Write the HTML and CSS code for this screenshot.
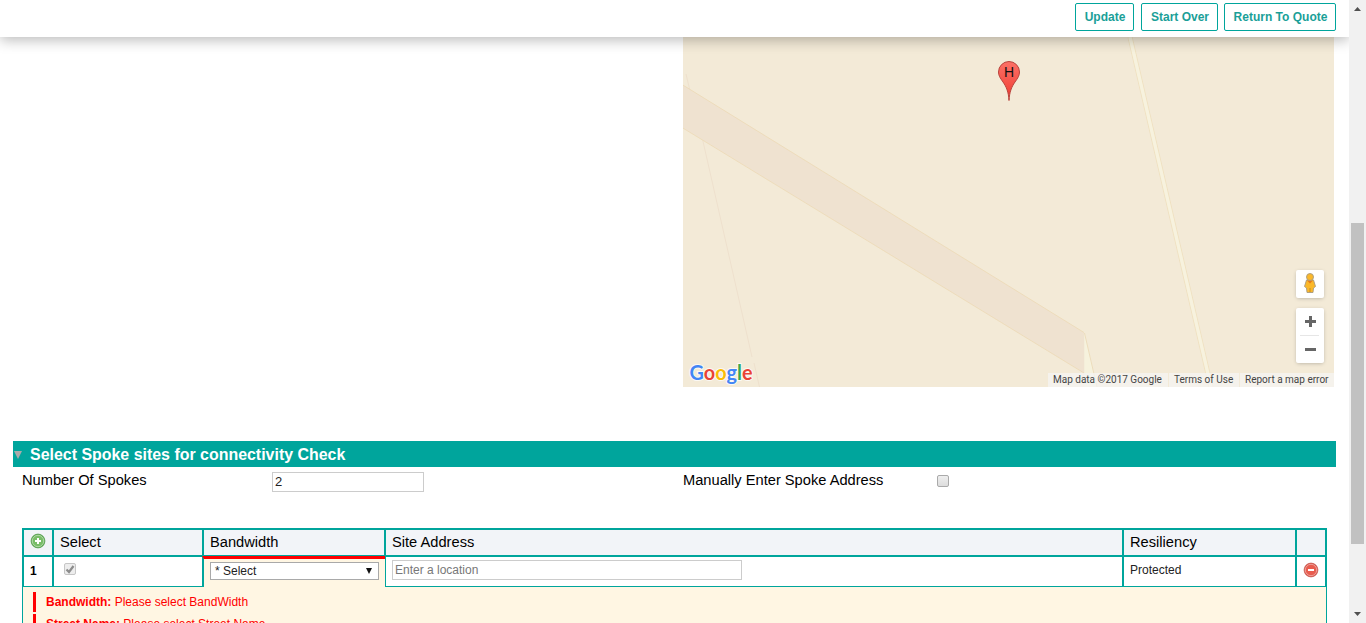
FILE: index.html
```html
<!DOCTYPE html>
<html lang="en">
<head>
<meta charset="utf-8">
<title>Connectivity Check</title>
<link rel="stylesheet" href="styles.css">
</head>
<body>
<div class="page">
  <header class="toolbar">
    <button class="btn">Update</button>
    <button class="btn">Start Over</button>
    <button class="btn">Return To Quote</button>
  </header>

  <div class="map">
    <svg class="map-tiles" width="651" height="350" viewBox="0 0 651 350">
      <rect width="651" height="350" fill="#f3ead7"/>
      <path d="M3 37 7 54M19 100 69 320M71 326 76.500 350" fill="none" stroke="#eee0cd"/>
      <path d="M-1 47.500 401 295.500V336L-1 90.500Z" fill="#efe2d0"/>
      <path d="M-1 47.500 401 295.500M401 336-1 90.500" fill="none" stroke="#ecd9b5" stroke-width=".8"/>
      <path d="M401.500 296V350H414.500Z" fill="#f6f2dd"/>
      <path d="M401.500 296 414 350" fill="none" stroke="#ecdcbc"/>
      <path d="M447 0 528 350" fill="none" stroke="#efe0bf" stroke-width="5"/>
      <path d="M447 0 528 350" fill="none" stroke="#f7f2de" stroke-width="3.400"/>
    </svg>
    <svg class="marker" width="24" height="42" viewBox="0 0 24 42">
      <defs><linearGradient id="pin" x1="0" y1="0" x2="0" y2="1"><stop offset="0" stop-color="#fc7167"/><stop offset="1" stop-color="#ef3a30"/></linearGradient></defs>
      <path d="M12 40.500C11.500 32 9.500 27 6 22 3 17.800 1.500 15.500 1.500 12A10.500 10.500 0 0 1 22.500 12C22.500 15.500 21 17.800 18 22 14.500 27 12.500 32 12 40.500Z" fill="url(#pin)" stroke="#b9433c"/>
      <text x="12" y="17" text-anchor="middle" class="marker-label">H</text>
    </svg>
    <svg class="logo" width="68" height="28" viewBox="0 0 68 28">
      <text x="2.500" y="20" textLength="63" lengthAdjust="spacingAndGlyphs"><tspan fill="#4285f4">G</tspan><tspan fill="#ea4335">o</tspan><tspan fill="#fbbc05">o</tspan><tspan fill="#4285f4">g</tspan><tspan fill="#34a853">l</tspan><tspan fill="#ea4335">e</tspan></text>
    </svg>
    <div class="map-controls">
      <div class="control pegman">
        <svg width="14" height="22" viewBox="0 0 14 22">
          <path d="M3.500 8H10.500L12.500 14.500 10.500 16 10 20.500H4L3.500 16 1.500 14.500Z" fill="#fbb829" stroke="#a79a80" stroke-width=".9"/>
          <path d="M4 8.500H10L7 11.500Z" fill="#e87a19"/>
          <path d="M7 16V20" stroke="#c58c20"/>
          <circle cx="7" cy="5" r="3.500" fill="#fbb829" stroke="#a79a80" stroke-width=".9"/>
        </svg>
      </div>
      <div class="control zoom">
        <svg width="28" height="55" viewBox="0 0 28 55">
          <path d="M9 13.500H20M14.500 8V19M9 41.500H20" stroke="#666" stroke-width="3" fill="none"/>
          <path d="M4 27.500H23" stroke="#e6e6e6"/>
        </svg>
      </div>
    </div>
    <div class="map-credits">
      <span class="credit-data">Map data ©2017 Google</span><span class="credit-terms">Terms of Use</span><span class="credit-report">Report a map error</span>
    </div>
  </div>

  <section class="spokes">
    <h2 class="section-title"><svg width="8" height="8" viewBox="0 0 8 8"><path d="M0 0H8L4 8Z" fill="#aaa"/></svg>Select Spoke sites for connectivity Check</h2>
    <div class="fields">
      <label class="label-count">Number Of Spokes</label>
      <div class="text-box count">2</div>
      <label class="label-manual">Manually Enter Spoke Address</label>
      <div class="checkbox"></div>
    </div>

    <div class="grid">
      <div class="row head">
        <div class="cell center">
          <svg width="16" height="16" viewBox="0 0 16 16"><circle cx="8" cy="8" r="6.900" fill="#67b15c" stroke="#529b4a" stroke-width=".8"/><circle cx="8" cy="8" r="5.700" fill="#78bd68" stroke="#b5dbac" stroke-width=".9"/><path d="M8 5V11M5 8H11" stroke="#fff" stroke-width="2"/></svg>
        </div>
        <div class="cell">Select</div>
        <div class="cell">Bandwidth</div>
        <div class="cell">Site Address</div>
        <div class="cell">Resiliency</div>
        <div class="cell"></div>
      </div>
      <div class="row body">
        <div class="cell number">1</div>
        <div class="cell pick">
          <div class="checkbox disabled"><svg width="10" height="10" viewBox="0 0 10 10"><path d="M1.500 5.500 4 8 8.500 2" fill="none" stroke="#8c8c8c" stroke-width="2.200"/></svg></div>
        </div>
        <div class="cell invalid">
          <div class="select">* Select<svg width="6" height="6" viewBox="0 0 6 6"><path d="M0 0H6L3 6Z" fill="#111"/></svg></div>
        </div>
        <div class="cell address"><div class="text-box location">Enter a location</div></div>
        <div class="cell resiliency">Protected</div>
        <div class="cell center">
          <svg width="16" height="16" viewBox="0 0 16 16"><circle cx="8" cy="8" r="6.900" fill="#d9534a" stroke="#c65a50" stroke-width=".8"/><circle cx="8" cy="8" r="5.700" fill="#e85c4e" stroke="#f0a79f" stroke-width=".9"/><path d="M5 8H11" stroke="#fff" stroke-width="2"/></svg>
        </div>
      </div>
      <div class="errors">
        <p class="error"><b>Bandwidth:</b> Please select BandWidth</p>
        <p class="error"><b>Street Name:</b> Please select Street Name</p>
      </div>
    </div>
  </section>
</div>

<div class="scrollbar">
  <svg width="7" height="4" viewBox="0 0 7 4"><path d="M0 4H7L3.500 0Z" fill="#505050"/></svg>
  <div class="track"><div class="thumb"></div></div>
  <svg width="7" height="4" viewBox="0 0 7 4"><path d="M0 0H7L3.500 4Z" fill="#505050"/></svg>
</div>
</body>
</html>
```
FILE: styles.css
```css
* { box-sizing: border-box; }

body {
  margin: 0;
  display: flex;
  width: 1366px;
  height: 623px;
  overflow: hidden;
  background: #fff;
  color: #000;
  font-family: "Liberation Sans", Arial, sans-serif;
}

svg { display: block; flex: none; }

.page {
  width: 1349px;
  height: 623px;
  overflow: hidden;
}

.toolbar {
  position: relative;
  z-index: 2;
  display: flex;
  justify-content: flex-end;
  height: 37px;
  padding: 3px 13px 0 0;
  background: #fff;
  box-shadow: 0 3px 14px rgba(0, 0, 0, .28);
}

.btn {
  height: 28px;
  margin: 0 0 0 6px;
  padding: 0 7px 0 8px;
  border: 1px solid #00a59c;
  border-radius: 2px;
  background: #fff;
  color: #1a9f98;
  font: bold 12px "Liberation Sans", Arial, sans-serif;
  white-space: nowrap;
}

.btn:nth-child(1) { width: 59px; }
.btn:nth-child(2) { width: 77px; margin-left: 7px; }
.btn:nth-child(3) { width: 112px; }

.map {
  position: relative;
  width: 651px;
  height: 350px;
  margin-left: 683px;
  overflow: hidden;
}

.marker { position: absolute; left: 314px; top: 23px; }
.marker-label { font-size: 14px; fill: #111; }

.logo { position: absolute; left: 4px; top: 323px; }
.logo text {
  font: 700 20px Lato, sans-serif;
  stroke: rgba(255, 255, 255, .75);
  stroke-width: 2px;
  paint-order: stroke;
}

.map-controls {
  position: absolute;
  left: 613px;
  top: 233px;
  display: flex;
  flex-direction: column;
  gap: 10px;
}

.control {
  width: 28px;
  border-radius: 2px;
  background: #fff;
  box-shadow: 0 1px 4px -1px rgba(0, 0, 0, .3);
}

.pegman { display: flex; justify-content: center; height: 28px; padding-top: 2px; }
.zoom { height: 55px; }

.map-credits {
  position: absolute;
  right: 0;
  bottom: 0;
  display: flex;
  gap: 1px;
  height: 14px;
  color: #444;
  font: 10px/14px Roboto, sans-serif;
  white-space: nowrap;
}

.map-credits span { padding-left: 5px; background: rgba(245, 245, 245, .7); }
.credit-data { width: 120px; }
.credit-terms { width: 70px; }
.credit-report { width: 94px; }

.spokes { padding: 54px 13px 0; }

.section-title {
  display: flex;
  align-items: center;
  gap: 8px;
  height: 26px;
  margin: 0;
  padding: 1px 0 0 1px;
  background: #00a59c;
  color: #fff;
  font-size: 15.95px;
  line-height: 26px;
}

.fields {
  display: flex;
  align-items: flex-start;
  height: 61px;
  padding: 5px 0 0 9px;
  font-size: 14.67px;
  line-height: 16px;
}

.label-count { width: 250px; }
.label-manual { width: 254px; margin-left: 259px; }

.text-box {
  height: 20px;
  padding-left: 2px;
  border: 1px solid #ccc;
  background: #fff;
  color: #222;
  font-size: 13px;
  line-height: 18px;
}

.count { width: 152px; }

.checkbox {
  width: 12px;
  height: 12px;
  margin-top: 3px;
  border: 1px solid #aaa;
  border-radius: 2px;
  background: linear-gradient(#eee, #ddd);
}

.checkbox.disabled { border-color: #c6c6c6; background: #ededed; }

.grid { width: 1305px; margin-left: 9px; border-top: 2px solid #00a59c; }

.row { display: grid; grid-template-columns: 30px 150px 182px 738px 173px 32px; }
.cell { border-left: 2px solid #00a59c; padding-left: 6px; }
.cell:last-child { border-right: 2px solid #00a59c; }

.head .cell {
  height: 27px;
  border-bottom: 2px solid #00a59c;
  background: #f2f4f8;
  font-size: 14.67px;
  line-height: 24px;
}

.body .cell { height: 30px; border-bottom: 1px solid #00a59c; font-size: 12px; }

.row .cell.center { display: flex; align-items: flex-start; justify-content: center; padding: 3px 0 0; }
.body .cell.center { padding-top: 5px; }
.body .number { font-weight: bold; line-height: 28px; }
.pick { padding: 6px 0 0 10px; }
.pick .checkbox { margin: 0; }
.row .invalid {
  position: relative;
  height: 31px;
  margin: -1px 0 0 0;
  padding-top: 3px;
  border-top: 3px solid #f00;
  border-left-color: #00a59c;
  border-bottom: 0;
  background: #fff6e3;
}
.row .invalid { margin-right: -1px; }

.select {
  display: flex;
  align-items: center;
  justify-content: space-between;
  width: 169px;
  height: 18px;
  padding: 0 6px 0 4px;
  border: 1px solid #a9a9a9;
  background: #fff;
  color: #222;
  font-size: 12px;
}

.address { padding-top: 3px; }
.location { width: 350px; color: #777; font-size: 12px; }
.resiliency { color: #222; line-height: 26px; }

.errors {
  height: 60px;
  padding: 5px 0 0 10px;
  border: 1px solid #00a59c;
  border-width: 0 1px;
  background: #fff6e3;
  color: #f00;
}

.error {
  height: 20px;
  margin: 0 0 2px;
  padding-left: 10px;
  border-left: 3px solid #f00;
  font-size: 12px;
  line-height: 20px;
}

.scrollbar {
  display: flex;
  flex-direction: column;
  align-items: center;
  width: 17px;
  height: 623px;
  padding: 7px 0;
  background: #f1f1f1;
}

.track { flex: 1; padding-top: 212px; }
.thumb { width: 13px; height: 321px; background: #c1c1c1; }
```
